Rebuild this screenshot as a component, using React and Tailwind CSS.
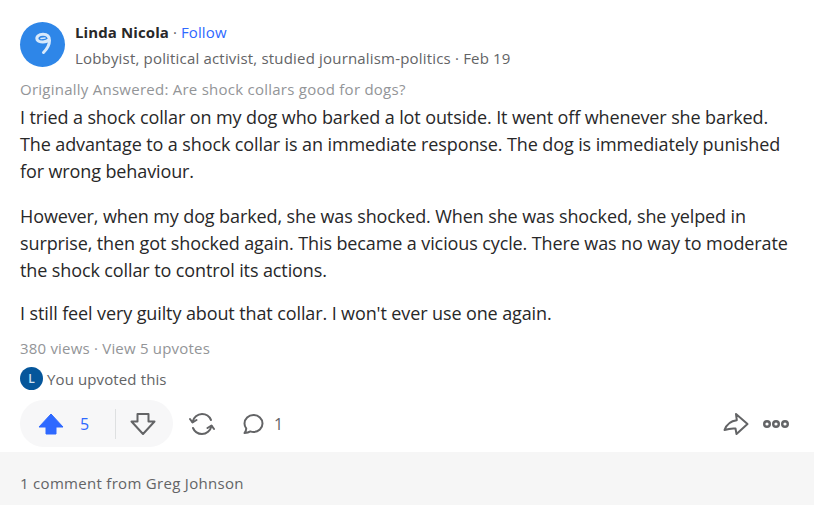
const font = { fontFamily: '"Open Sans", "Noto Sans", sans-serif' };

function Avatar() {
  return (
    <div className="w-[45px] h-[45px] rounded-full bg-[#2e86e8] flex items-center justify-center shrink-0">
      <svg width="18" height="24" viewBox="0 0 18 24" fill="none" stroke="#d8e9fb" strokeWidth="3" strokeLinecap="round" strokeLinejoin="round">
        <path d="M15 7.5C12.5 10.5 5.5 10.8 3.2 7.8C1.8 4.8 5 2.2 9 2.2C13 2.2 15.5 4.5 15.5 8.5C15.5 13 13 17 9.5 20.5" />
        <path d="M7 6.5L11 6" strokeWidth="1.6" />
      </svg>
    </div>
  );
}

function UpvoteIcon() {
  return (
    <svg width="26" height="22" viewBox="0 0 26 22">
      <path d="M13 1L25 14H18V21H8V14H1Z" fill="#2e69ff" stroke="#2e69ff" strokeWidth="1" strokeLinejoin="round" />
    </svg>
  );
}

function DownvoteIcon() {
  return (
    <svg width="26" height="24" viewBox="0 0 26 24" fill="none" stroke="#636466" strokeWidth="2" strokeLinejoin="round">
      <path d="M13 22L1.5 9.5H7.5V2H18.5V9.5H24.5Z" />
    </svg>
  );
}

function ShareLoopIcon() {
  return (
    <svg width="26" height="24" viewBox="0 0 26 24" fill="none" stroke="#636466" strokeWidth="2" strokeLinecap="round" strokeLinejoin="round">
      <path d="M3.5 10C4.5 5.5 8.5 2 13 2C17 2 20.5 4.5 22 8" />
      <path d="M22.5 14C21.5 18.5 17.5 22 13 22C9 22 5.5 19.5 4 16" />
      <path d="M1 7L3.5 10.5L7.5 8" />
      <path d="M25 17L22.5 13.5L18.5 16" />
    </svg>
  );
}

function CommentIcon() {
  return (
    <svg width="22" height="22" viewBox="0 0 22 22" fill="none" stroke="#636466" strokeWidth="2" strokeLinejoin="round">
      <path d="M11.5 2C6.5 2 2.5 5.7 2.5 10.5C2.5 12.5 3.2 14 4.2 15.3C4.4 17 3.6 18.6 2.5 20C5 20 7 19.4 8.4 18.4C9.4 18.8 10.4 19 11.5 19C16.5 19 20.5 15.3 20.5 10.5C20.5 5.7 16.5 2 11.5 2Z" />
    </svg>
  );
}

function ForwardIcon() {
  return (
    <svg width="26" height="24" viewBox="0 0 26 24" fill="none" stroke="#636466" strokeWidth="2" strokeLinejoin="round">
      <path d="M13 2L24.5 12L13.5 22L12.5 16.5C8 16 4.5 17 1.5 18C3.5 12.5 7.5 9 13.8 8.2Z" />
    </svg>
  );
}

function MoreIcon() {
  return (
    <svg width="26" height="8" viewBox="0 0 26 8" fill="none" stroke="#636466" strokeWidth="2.4">
      <circle cx="4" cy="4" r="2.8" />
      <circle cx="13" cy="4" r="2.8" />
      <circle cx="22" cy="4" r="2.8" />
    </svg>
  );
}

export default function App() {
  return (
    <div className="w-[814px] h-[505px] bg-white flex flex-col overflow-hidden" style={font}>
      <div className="px-5 pt-5 flex-1">
        <div className="flex items-center gap-[10px]">
          <Avatar />
          <div className="flex flex-col">
            <div className="text-[15px] leading-[20px] mt-[2px] tracking-[0.1px] text-[#282829]">
              <span className="font-bold">Linda Nicola</span>
              <span className="text-[#636466]"> · </span>
              <span className="text-[#2e69ff]">Follow</span>
            </div>
            <div className="text-[15px] leading-[20px] mt-[6px] tracking-[0.18px] text-[#636466]">
              Lobbyist, political activist, studied journalism-politics · Feb 19
            </div>
          </div>
        </div>
        <div className="text-[15px] leading-[20px] mt-[11px] tracking-[0.25px] text-[#939598]">
          Originally Answered: Are shock collars good for dogs?
        </div>
        <div className="text-[18px] leading-[27px] tracking-[-0.11px] text-[#282829] mt-[5px]">
          <p>I tried a shock collar on my dog who barked a lot outside. It went off whenever she barked.<br />The advantage to a shock collar is an immediate response. The dog is immediately punished<br />for wrong behaviour.</p>
          <p className="mt-[18px]">However, when my dog barked, she was shocked. When she was shocked, she yelped in<br />surprise, then got shocked again. This became a vicious cycle. There was no way to moderate<br />the shock collar to control its actions.</p>
          <p className="mt-[16px]">I still feel very guilty about that collar. I won't ever use one again.</p>
        </div>
        <div className="text-[15px] leading-[20px] mt-[11px] tracking-[0.2px] text-[#939598]">380 views · View 5 upvotes</div>
        <div className="flex items-center gap-[4px] mt-[9px]">
          <div className="w-[23px] h-[23px] rounded-full bg-[#05569b] text-[#cfe2f3] text-[12px] font-semibold flex items-center justify-center">L</div>
          <span className="text-[15px] leading-[20px] tracking-[0.12px] text-[#636466]">You upvoted this</span>
        </div>
        <div className="flex items-center mt-[10px]">
          <div className="flex items-center h-[47px] w-[153px] rounded-full bg-[#f7f7f8] pl-[18px]">
            <UpvoteIcon />
            <span className="text-[#2e69ff] text-[16px] ml-[16px]">5</span>
            <div className="w-px h-[30px] bg-[#dee0e1] ml-[26px]" />
            <div className="ml-[14px] flex"><DownvoteIcon /></div>
          </div>
          <div className="ml-[16px] flex"><ShareLoopIcon /></div>
          <div className="ml-[27px] flex"><CommentIcon /></div>
          <span className="text-[#636466] text-[16px] ml-[10px]">1</span>
          <div className="ml-auto flex items-center gap-[14px] mr-[5px]">
            <ForwardIcon />
            <MoreIcon />
          </div>
        </div>
      </div>
      <div className="h-[53px] bg-[#f6f6f6] px-5 pt-[10px] flex items-center text-[15px] tracking-[0.3px] text-[#636466]">
        1 comment from Greg Johnson
      </div>
    </div>
  );
}
